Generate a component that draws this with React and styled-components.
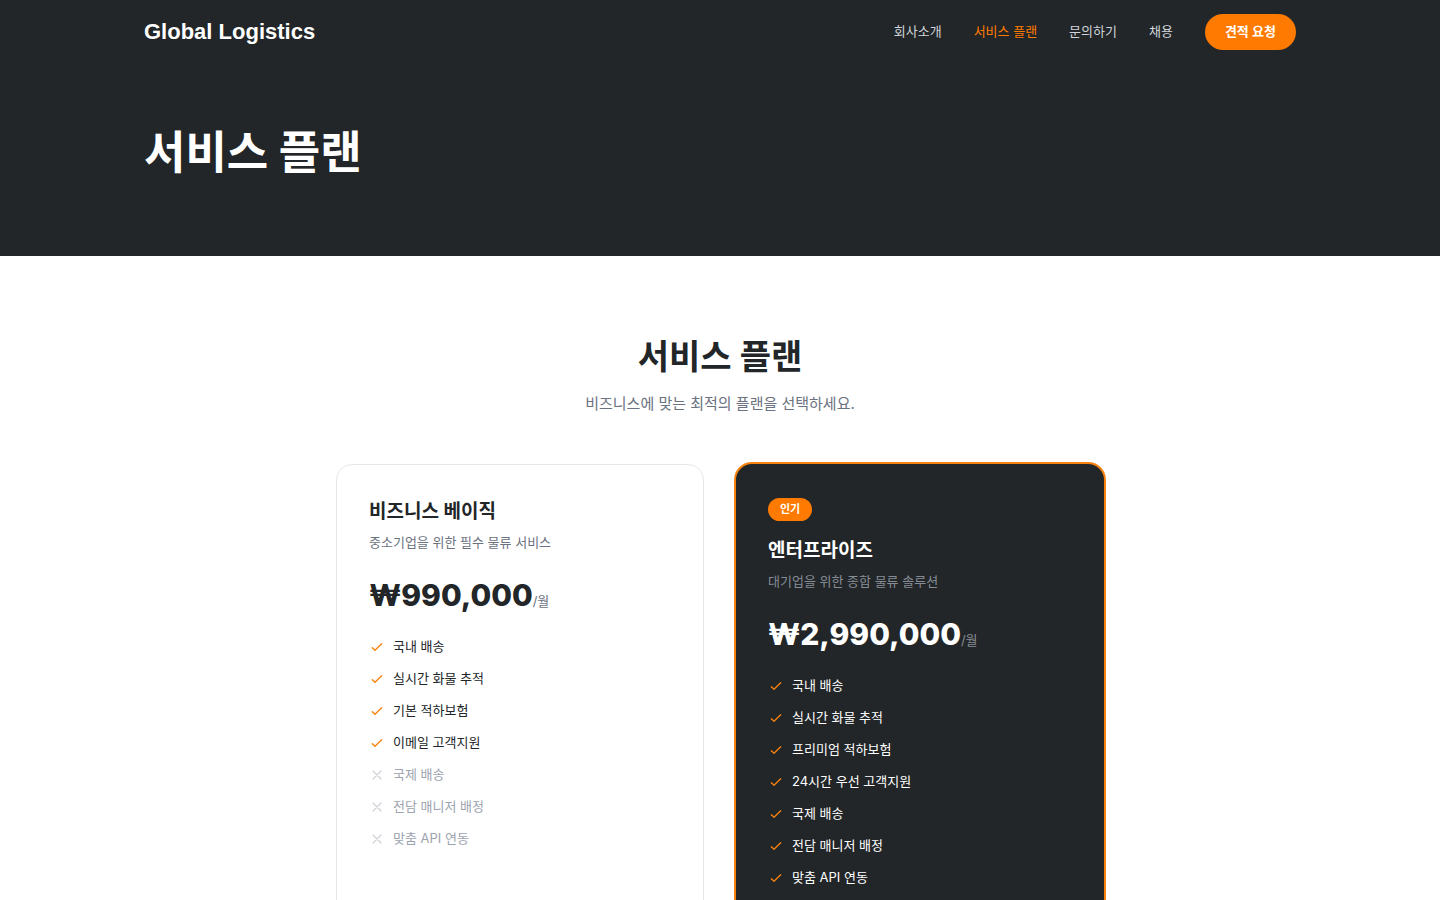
import React from "react";
import styled, { createGlobalStyle } from "styled-components";

const GlobalStyle = createGlobalStyle`
  *, *::before, *::after { box-sizing: border-box; }
  body {
    margin: 0;
    background: #ffffff;
    color: #222628;
    font-family: Inter, "Noto Sans CJK KR", sans-serif;
    font-size: 13px;
    line-height: 19px;
  }
  h1, h2, h3, p, ul { margin: 0; padding: 0; }
`;

const Container = styled.div`
  max-width: 1200px;
  margin: 0 auto;
  padding: 0 24px;
`;

const Header = styled.header`
  background: #222628;
`;

const Bar = styled(Container)`
  display: flex;
  align-items: center;
  justify-content: space-between;
  min-height: 64px;
`;

const Logo = styled.a`
  color: #ffffff;
  font-family: "Liberation Sans", Arial, sans-serif;
  font-size: 22px;
  font-weight: 700;
  line-height: 32px;
  text-decoration: none;
`;

const Nav = styled.nav`
  display: flex;
  align-items: baseline;
  gap: 32px;
`;

const NavLink = styled.a`
  color: ${(p) => (p.$active ? "#ff7a00" : "#d1d5db")};
  text-decoration: none;
`;

const QuoteButton = styled.button`
  border: 0;
  border-radius: 18px;
  padding: 8px 20px 9px;
  background: #ff7a00;
  color: #ffffff;
  font: inherit;
  font-weight: 600;
  cursor: pointer;
`;

const Hero = styled.section`
  background: #222628;
  padding: 64px 0 78px;
`;

const HeroTitle = styled.h1`
  color: #ffffff;
  font-size: 45px;
  font-weight: 700;
  line-height: 50px;
`;

const Plans = styled.main`
  padding: 80px 24px;
`;

const SectionTitle = styled.h2`
  font-size: 34px;
  font-weight: 700;
  line-height: 42px;
  text-align: center;
`;

const SectionText = styled.p`
  margin-top: 14px;
  color: #6b7280;
  font-size: 15px;
  line-height: 24px;
  text-align: center;
`;

const PlanGrid = styled.div`
  display: grid;
  grid-template-columns: repeat(auto-fit, minmax(280px, 1fr));
  gap: 32px;
  max-width: 768px;
  margin: 48px auto 0;
`;

const Card = styled.article`
  padding: 32px 32px 112px;
  border-radius: 16px;
  border: ${(p) => (p.$featured ? "0" : "1px solid #e5e7eb")};
  background: ${(p) => (p.$featured ? "#222628" : "#ffffff")};
  color: ${(p) => (p.$featured ? "#ffffff" : "#222628")};
  box-shadow: ${(p) => (p.$featured ? "0 0 0 2px #f5820d" : "none")};
`;

const BadgeRow = styled.div`
  display: flex;
  padding: 2px 0 15px;
`;

const Badge = styled.span`
  padding: 3px 12px 4px;
  border-radius: 12px;
  background: #ff7a00;
  color: #ffffff;
  font-size: 11px;
  font-weight: 600;
  line-height: 16px;
`;

const PlanName = styled.h3`
  font-size: 19px;
  font-weight: 700;
  line-height: 29px;
`;

const PlanText = styled.p`
  margin-top: 7px;
  color: ${(p) => (p.$featured ? "#868c96" : "#6b7280")};
`;

const Price = styled.p`
  display: flex;
  align-items: baseline;
  margin-top: 25px;
  font-size: 30px;
  font-weight: 800;
  line-height: 36px;
`;

const Period = styled.span`
  color: ${(p) => (p.$featured ? "#868c96" : "#6b7280")};
  font-size: 13px;
  font-weight: 400;
  line-height: 19px;
`;

const FeatureList = styled.ul`
  display: grid;
  gap: 13px;
  margin-top: 24px;
  list-style: none;
`;

const Feature = styled.li`
  display: flex;
  align-items: flex-start;
  gap: 8px;
  color: ${(p) => (p.$included ? "inherit" : "#9ca3af")};
`;

const Mark = styled.svg`
  flex: none;
  width: 16px;
  height: 16px;
  margin-top: 2px;
  fill: none;
  stroke: ${(p) => (p.$included ? "#f5820d" : "#d1d5db")};
  stroke-width: 2;
  stroke-linecap: round;
  stroke-linejoin: round;
`;

const links = ["회사소개", "서비스 플랜", "문의하기", "채용"];

const plans = [
  {
    name: "비즈니스 베이직",
    text: "중소기업을 위한 필수 물류 서비스",
    price: "₩990,000",
    included: ["국내 배송", "실시간 화물 추적", "기본 적하보험", "이메일 고객지원"],
    excluded: ["국제 배송", "전담 매니저 배정", "맞춤 API 연동"],
  },
  {
    name: "엔터프라이즈",
    text: "대기업을 위한 종합 물류 솔루션",
    price: "₩2,990,000",
    badge: "인기",
    featured: true,
    included: [
      "국내 배송",
      "실시간 화물 추적",
      "프리미엄 적하보험",
      "24시간 우선 고객지원",
      "국제 배송",
      "전담 매니저 배정",
      "맞춤 API 연동",
    ],
    excluded: [],
  },
];

function PlanFeature({ included, children }) {
  return (
    <Feature $included={included}>
      <Mark $included={included} viewBox="0 0 24 24" aria-hidden="true">
        <path d={included ? "M5 13l4 4L19 7" : "M6 18L18 6M6 6l12 12"} />
      </Mark>
      {children}
    </Feature>
  );
}

function Plan({ name, text, price, badge, featured, included, excluded }) {
  return (
    <Card $featured={featured}>
      {badge && (
        <BadgeRow>
          <Badge>{badge}</Badge>
        </BadgeRow>
      )}
      <PlanName>{name}</PlanName>
      <PlanText $featured={featured}>{text}</PlanText>
      <Price>
        {price}
        <Period $featured={featured}>/월</Period>
      </Price>
      <FeatureList>
        {included.map((item) => (
          <PlanFeature key={item} included>
            {item}
          </PlanFeature>
        ))}
        {excluded.map((item) => (
          <PlanFeature key={item} included={false}>
            {item}
          </PlanFeature>
        ))}
      </FeatureList>
    </Card>
  );
}

export default function App() {
  return (
    <>
      <GlobalStyle />
      <Header>
        <Bar>
          <Logo href="#">Global Logistics</Logo>
          <Nav>
            {links.map((label) => (
              <NavLink key={label} href="#" $active={label === "서비스 플랜"}>
                {label}
              </NavLink>
            ))}
            <QuoteButton type="button">견적 요청</QuoteButton>
          </Nav>
        </Bar>
      </Header>
      <Hero>
        <Container>
          <HeroTitle>서비스 플랜</HeroTitle>
        </Container>
      </Hero>
      <Plans>
        <SectionTitle>서비스 플랜</SectionTitle>
        <SectionText>비즈니스에 맞는 최적의 플랜을 선택하세요.</SectionText>
        <PlanGrid>
          {plans.map((plan) => (
            <Plan key={plan.name} {...plan} />
          ))}
        </PlanGrid>
      </Plans>
    </>
  );
}
